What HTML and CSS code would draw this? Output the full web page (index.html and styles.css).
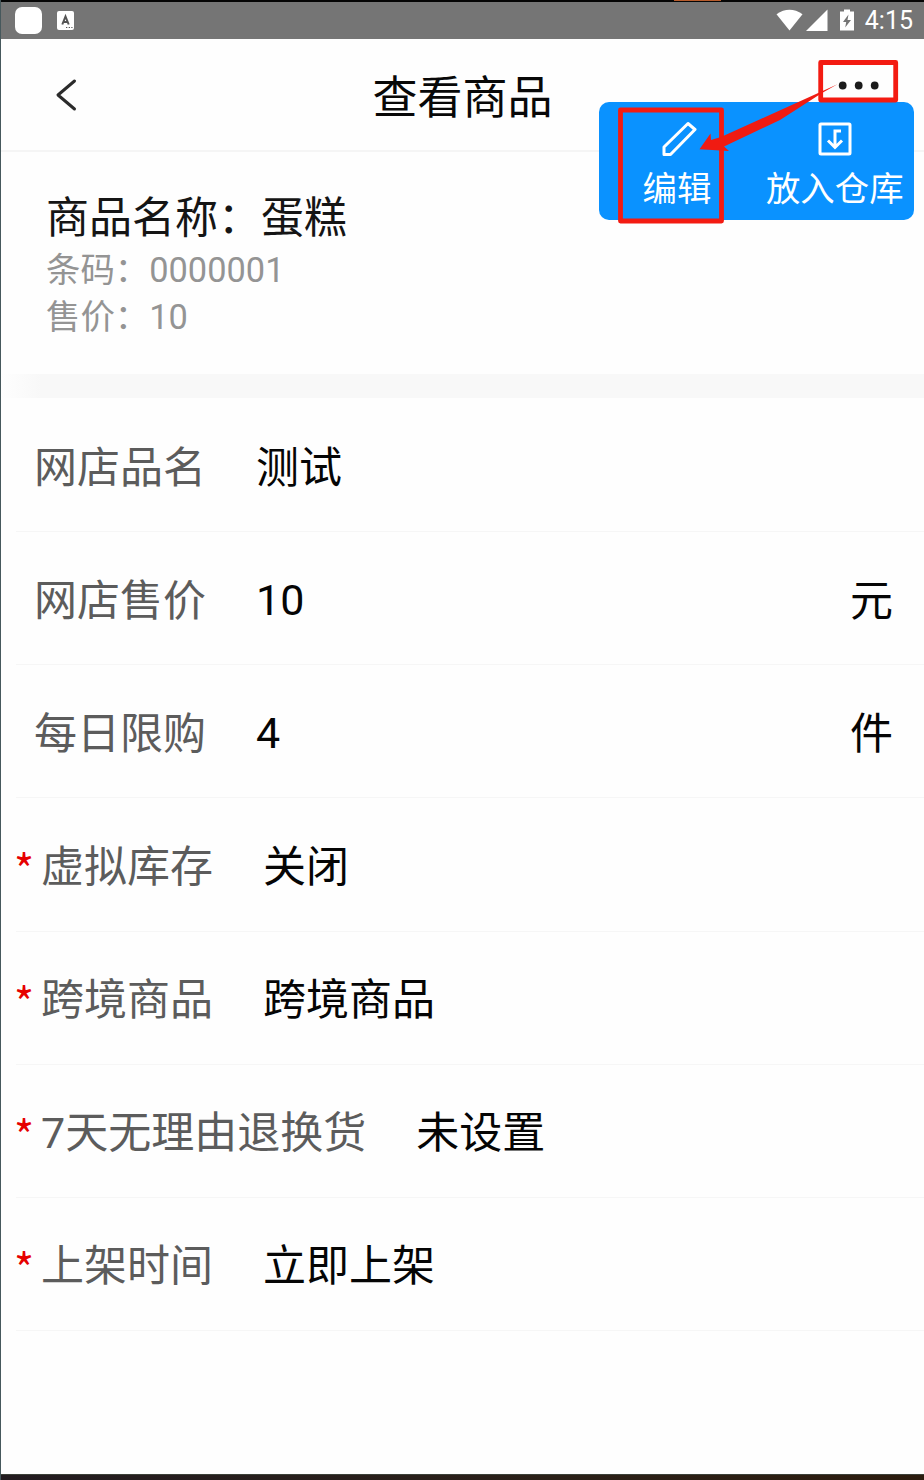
FILE: index.html
```html
<!DOCTYPE html>
<html lang="zh-CN">
<head>
<meta charset="utf-8">
<title>查看商品</title>
<link rel="stylesheet" href="styles.css">
</head>
<body>
<div class="screen">
  <div class="bezel-top"><span class="bezel-mark"></span></div>
  <div class="status">
    <span class="status-app"></span>
    <svg class="status-ime" width="17" height="19" viewBox="0 0 17 19"><rect width="17" height="19" rx="2" fill="#fff"/><path d="M5.300 13.500 8.500 5.500 11.700 13.500M6.300 11H10.700" fill="none" stroke="#555" stroke-width="2"/><path d="M9 16.500h1.300M11.700 16.500H13M14.300 16.500h1.200" stroke="#555" stroke-width="1.200"/></svg>
    <svg class="status-icons" width="82" height="26" viewBox="0 0 82 26"><path d="M.5 6.200Q13.500-2.500 26.500 6.200L13.500 22.500Z" fill="#fff"/><path d="M30 23 51.500 1.500V23Z" fill="#fff"/><path fill-rule="evenodd" d="M68 1.500h6v2h4V22.500H64V3.500h4ZM72.500 6.500 67 14h3.200l-1 5.500L75 12h-3.500Z" fill="#fff"/></svg>
    <span class="clock">4:15</span>
  </div>
  <header class="nav">
    <svg class="back" width="24" height="34" viewBox="0 0 24 34"><path d="M19.500 3 3 17 19.500 31" fill="none" stroke="#2b2b2b" stroke-width="3" stroke-linecap="round" stroke-linejoin="round"/></svg>
    <h1 class="title">查看商品</h1>
  </header>
  <section class="summary">
    <h2 class="product">商品名称：蛋糕</h2>
    <p class="meta">条码：0000001</p>
    <p class="meta">售价：10</p>
  </section>
  <div class="band"></div>
  <main class="rows">
    <div class="row"><span class="label">网店品名</span><span class="value">测试</span></div>
    <div class="row"><span class="label">网店售价</span><span class="value number">10</span><span class="unit">元</span></div>
    <div class="row"><span class="label">每日限购</span><span class="value number">4</span><span class="unit">件</span></div>
    <div class="row required"><span class="star">*</span><span class="label">虚拟库存</span><span class="value">关闭</span></div>
    <div class="row required"><span class="star">*</span><span class="label">跨境商品</span><span class="value">跨境商品</span></div>
    <div class="row required"><span class="star">*</span><span class="label">7天无理由退换货</span><span class="value">未设置</span></div>
    <div class="row required"><span class="star">*</span><span class="label">上架时间</span><span class="value">立即上架</span></div>
  </main>
  <div class="bezel-bottom"></div>

  <div class="menu">
    <div class="menu-item edit">
      <svg width="36" height="36" viewBox="0 0 36 36"><path d="M3 33.500V26L27 2.500 34 8.500 9.500 33.500Z" fill="none" stroke="#fff" stroke-width="3" stroke-linejoin="round"/></svg>
      <span>编辑</span>
    </div>
    <div class="menu-item store">
      <svg width="36" height="36" viewBox="0 0 36 36"><rect x="3" y="3" width="30" height="30" rx="1" fill="none" stroke="#fff" stroke-width="3"/><path d="M24 10H18V26M11 19.500 18 26.500 25 19.500" fill="none" stroke="#fff" stroke-width="3"/></svg>
      <span>放入仓库</span>
    </div>
  </div>
  <svg class="marks" width="310" height="170" viewBox="0 0 310 170">
    <g fill="#1b1b1b"><circle cx="242.700" cy="35.500" r="3.900"/><circle cx="258.700" cy="35.500" r="3.900"/><circle cx="274.700" cy="35.500" r="3.900"/></g>
    <g fill="none" stroke="#f31b12" stroke-width="4.800" stroke-linejoin="round"><rect x="220.700" y="12.500" width="75" height="37.500"/><rect x="20.500" y="60" width="101" height="111"/></g>
    <path d="M237.500 34.300 121 87 111 90 110.500 83.500 99.500 99.300 129 101 124 96.500 180 70 222 43Z" fill="#f01b12"/>
  </svg>
</div>
</body>
</html>
```
FILE: styles.css
```css
* { box-sizing: border-box; margin: 0; padding: 0; }
body {
  background: #fff;
  font-family: Roboto, "Noto Sans CJK SC", sans-serif;
  font-weight: 400;
}
h1, h2 { font-weight: 400; }
svg { display: block; flex: none; }
.screen {
  position: relative;
  display: flex;
  flex-direction: column;
  width: 924px;
  height: 1480px;
  overflow: hidden;
  border-left: 1px solid #46585c;
  background: #fefefe;
}
.bezel-top { height: 2px; flex: none; background: #050505; }
.bezel-mark { display: block; width: 47px; height: 1px; margin-left: 673px; background: #b85c2c; }
.status {
  display: flex;
  align-items: center;
  height: 37px;
  flex: none;
  padding: 0 11px 0 14px;
  background: #757575;
  color: #fff;
}
.status-app { width: 27px; height: 27px; border-radius: 7px; background: #fff; }
.status-ime { margin-left: 15px; }
.status-icons { margin-left: auto; }
.clock { margin-left: 7px; font-size: 25px; line-height: 37px; }
.nav {
  display: grid;
  grid-template-columns: 100px 1fr 100px;
  align-items: center;
  height: 113px;
  flex: none;
  border-bottom: 2px solid #f5f5f5;
}
.back { margin-left: 54px; }
.title { text-align: center; font-size: 45px; line-height: 60px; color: #080808; padding-top: 9px; }
.summary { height: 222px; flex: none; padding: 38px 0 0 45px; }
.product { font-size: 43px; line-height: 57px; color: #151515; }
.meta { font-size: 34.400px; line-height: 47px; color: #949494; }
.band { height: 24px; flex: none; background: linear-gradient(90deg, #fefefe, #f8f8f8 40px); }
.rows { display: flex; flex-direction: column; padding-top: 1px; }
.row {
  display: flex;
  align-items: center;
  height: 133.150px;
  padding: 4px 31px 0 33px;
  font-size: 43px;
  line-height: 60px;
  background: linear-gradient(#f6f6f6, #f6f6f6) 15px 100% / 100% 1px no-repeat;
}
.required { padding-left: 13px; }
.star { width: 27px; color: #e60000; font-family: "Noto Sans CJK SC", sans-serif; }
.label { color: #5c5c5c; }
.value { margin-left: 50px; color: #050505; }
.number { padding-bottom: 2px; }
.unit { margin-left: auto; color: #050505; }
.bezel-bottom { height: 6px; flex: none; margin: auto 0 0 -1px; background: linear-gradient(90deg, #231c20, #2b2018 60%, #2c1c0e); border-top: 1px solid #3c4038; }
.menu {
  position: absolute;
  left: 597.500px;
  top: 102px;
  display: flex;
  width: 315.500px;
  height: 118px;
  border-radius: 10px;
  background: #0a92ff;
  color: #fff;
  font-size: 34.400px;
  line-height: 48px;
}
.menu-item { display: flex; flex-direction: column; align-items: center; gap: 8px; padding-top: 19px; }
.edit { width: 157px; }
.edit svg { margin-left: 4px; }
.store { width: 158.500px; }
.marks { position: absolute; left: 599px; top: 50px; overflow: visible; }
```
